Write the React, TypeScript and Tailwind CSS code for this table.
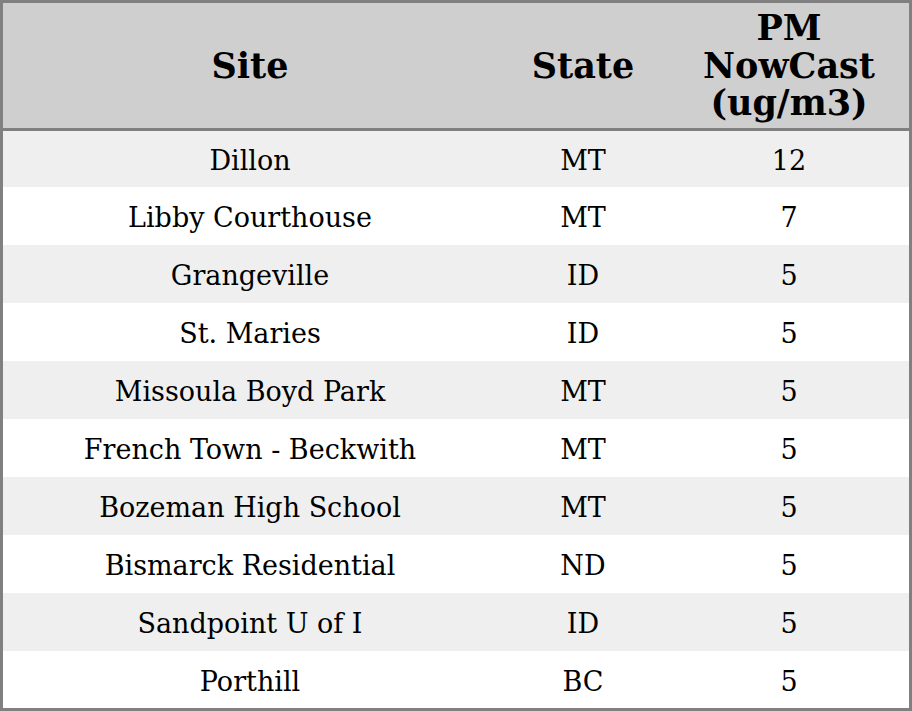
import React from "react";

const rows: [string, string, string][] = [
  ["Dillon", "MT", "12"],
  ["Libby Courthouse", "MT", "7"],
  ["Grangeville", "ID", "5"],
  ["St. Maries", "ID", "5"],
  ["Missoula Boyd Park", "MT", "5"],
  ["French Town - Beckwith", "MT", "5"],
  ["Bozeman High School", "MT", "5"],
  ["Bismarck Residential", "ND", "5"],
  ["Sandpoint U of I", "ID", "5"],
  ["Porthill", "BC", "5"],
];

export default function App() {
  return (
    <div
      className="w-[912px] h-[711px] border-[3px] border-[#808080] flex flex-col bg-white text-black"
      style={{ fontFamily: '"DejaVu Serif", serif' }}
    >
      <div className="h-[125px] bg-[#cfcfcf] flex items-center border-b-[3px] border-[#808080] box-content shrink-0 font-bold text-[35px] leading-[37.5px]">
        <div className="w-[494px] text-center">Site</div>
        <div className="w-[172px] text-center">State</div>
        <div className="w-[240px] text-center">
          PM
          <br />
          NowCast
          <br />
          (ug/m3)
        </div>
      </div>
      <div className="flex-1 flex flex-col">
        {rows.map((r, i) => (
          <div
            key={i}
            className={`shrink-0 flex items-center text-[27px] leading-[32px] pt-[4px] ${
              i === 0 ? "h-[56px]" : i === rows.length - 1 ? "h-[57px]" : "h-[58px]"
            } ${i % 2 === 0 ? "bg-[#efefef]" : "bg-white"}`}
          >
            <div className="w-[494px] text-center">{r[0]}</div>
            <div className="w-[172px] text-center">{r[1]}</div>
            <div className="w-[240px] text-center">{r[2]}</div>
          </div>
        ))}
      </div>
    </div>
  );
}
